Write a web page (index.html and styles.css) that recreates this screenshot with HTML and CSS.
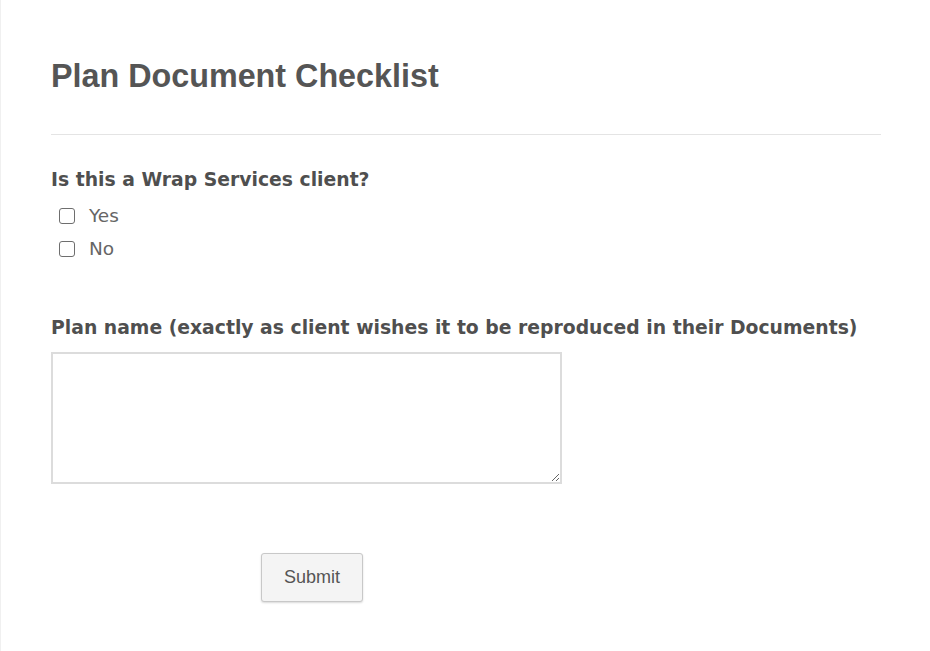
FILE: index.html
```html
<!DOCTYPE html>
<html lang="en">
<head>
    <meta charset="UTF-8">
    <meta name="viewport" content="width=device-width, initial-scale=1.0">
    <title>Plan Document Checklist</title>
    <link rel="stylesheet" href="styles.css">
</head>
<body>
    <div class="page">
        <form class="form" onsubmit="return false;">
            <h1 class="form-title">Plan Document Checklist</h1>
            <hr class="divider">
            <div class="field">
                <div class="field-label">Is this a Wrap Services client?</div>
                <label class="choice"><input type="checkbox" name="wrap" value="yes"><span>Yes</span></label>
                <label class="choice"><input type="checkbox" name="wrap" value="no"><span>No</span></label>
            </div>
            <div class="field field-text">
                <label class="field-label" for="planName">Plan name (exactly as client wishes it to be reproduced in their Documents)</label>
                <textarea id="planName" name="planName"></textarea>
            </div>
            <div class="actions">
                <input type="submit" class="submit" value="Submit">
            </div>
        </form>
    </div>
</body>
</html>
```

FILE: styles.css
```css
body {
    margin: 0;
    padding: 0;
    background-color: #ffffff;
    font-family: 'DejaVu Sans', Verdana, sans-serif;
    color: #555;
}
.page {
    min-height: 651px;
    box-sizing: border-box;
    border-left: 1px solid #f0f0f0;
}
.form {
    width: 830px;
    padding: 56px 0 0 50px;
}
.form-title {
    margin: 0;
    font-family: 'Liberation Sans', Arial, sans-serif;
    font-size: 32.3px;
    font-weight: bold;
    line-height: 40px;
    color: #555;
}
.divider {
    margin: 38px 0 0;
    border: none;
    border-top: 1px solid #e4e4e4;
}
.field {
    margin-top: 34px;
}
.field-label {
    display: block;
    font-size: 18.8px;
    font-weight: bold;
    line-height: 22px;
    color: #4f4f4f;
    margin-bottom: 8px;
}
.choice {
    display: flex;
    align-items: center;
    height: 33px;
    font-size: 18.5px;
    color: #666;
    margin-left: 8px;
}
.choice input {
    appearance: none;
    width: 16px;
    height: 16px;
    margin: 0 14px 0 0;
    border: 1px solid #6e6e6e;
    border-radius: 3px;
    background: #fff;
}
.field-text {
    margin-top: 52px;
}
.field-text .field-label {
    margin-bottom: 13px;
}
textarea {
    display: block;
    width: 511px;
    height: 132px;
    box-sizing: border-box;
    border: 2px solid #dcdcdc;
    border-radius: 0;
    resize: both;
}
.actions {
    padding: 69px 0 0 210px;
}
.submit {
    width: 102px;
    height: 49px;
    font-family: 'Liberation Sans', Arial, sans-serif;
    font-size: 18px;
    color: #555;
    background-color: #f4f4f4;
    border: 1px solid #c8c8c8;
    border-radius: 3px;
    box-shadow: 0 1px 2px rgba(0, 0, 0, 0.15);
    cursor: pointer;
}
```
